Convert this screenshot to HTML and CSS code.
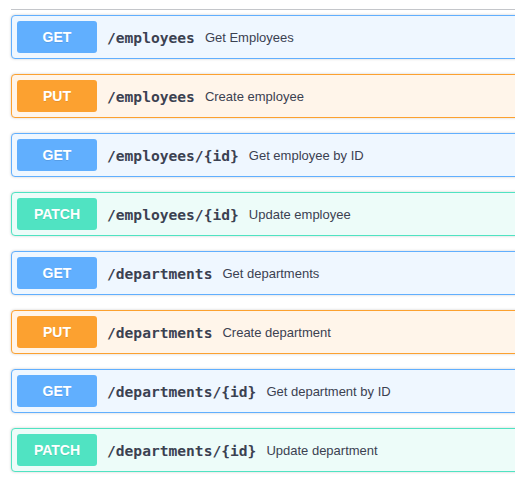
FILE: index.html
```html
<!DOCTYPE html>
<html>
<head>
<meta charset="utf-8">
<link rel="stylesheet" href="styles.css">
</head>
<body>
<div class="viewport">
<div class="section">
  <div class="tag-line"></div>
  <div class="ops">
    <div class="opblock get"><span class="method">GET</span><span class="path">/employees</span><span class="desc">Get Employees</span></div>
    <div class="opblock put"><span class="method">PUT</span><span class="path">/employees</span><span class="desc">Create employee</span></div>
    <div class="opblock get"><span class="method">GET</span><span class="path">/employees/{id}</span><span class="desc">Get employee by ID</span></div>
    <div class="opblock patch"><span class="method">PATCH</span><span class="path">/employees/{id}</span><span class="desc">Update employee</span></div>
    <div class="opblock get"><span class="method">GET</span><span class="path">/departments</span><span class="desc">Get departments</span></div>
    <div class="opblock put"><span class="method">PUT</span><span class="path">/departments</span><span class="desc">Create department</span></div>
    <div class="opblock get"><span class="method">GET</span><span class="path">/departments/{id}</span><span class="desc">Get department by ID</span></div>
    <div class="opblock patch"><span class="method">PATCH</span><span class="path">/departments/{id}</span><span class="desc">Update department</span></div>
  </div>
</div>
</div>
</body>
</html>
```
FILE: styles.css
```css
html, body {
  margin: 0;
  padding: 0;
  background: #fff;
  overflow: hidden;
}
.viewport {
  width: 515px;
  height: 484px;
  overflow: hidden;
}
.section {
  padding: 9px 0 0 11px;
  width: 620px;
}
.tag-line {
  height: 0;
  border-bottom: 1px solid rgba(59, 65, 81, 0.3);
  margin-bottom: 5px;
}
.ops {
  display: flex;
  flex-direction: column;
  gap: 15px;
}
.opblock {
  display: flex;
  align-items: center;
  padding: 5px;
  border: 1px solid;
  border-radius: 4px;
  box-shadow: 0 0 3px rgba(0, 0, 0, 0.19);
}
.method {
  min-width: 80px;
  box-sizing: border-box;
  padding: 6px 15px;
  line-height: 20px;
  font-family: "Liberation Sans", Arial, sans-serif;
  font-size: 14px;
  font-weight: 700;
  color: #fff;
  text-align: center;
  border-radius: 3px;
  text-shadow: 0 1px 0 rgba(0, 0, 0, 0.1);
}
.path {
  padding: 0 10px;
  font-family: "DejaVu Sans Mono", monospace;
  font-weight: 700;
  font-size: 14.6px;
  color: #3b4151;
}
.desc {
  font-family: "Liberation Sans", Arial, sans-serif;
  font-size: 13px;
  color: #3b4151;
}
.get { border-color: #61affe; background: #eff7ff; }
.get .method { background: #61affe; }
.put { border-color: #fca130; background: #fff5ea; }
.put .method { background: #fca130; }
.patch { border-color: #50e3c2; background: #edfcf9; }
.patch .method { background: #50e3c2; }
```
